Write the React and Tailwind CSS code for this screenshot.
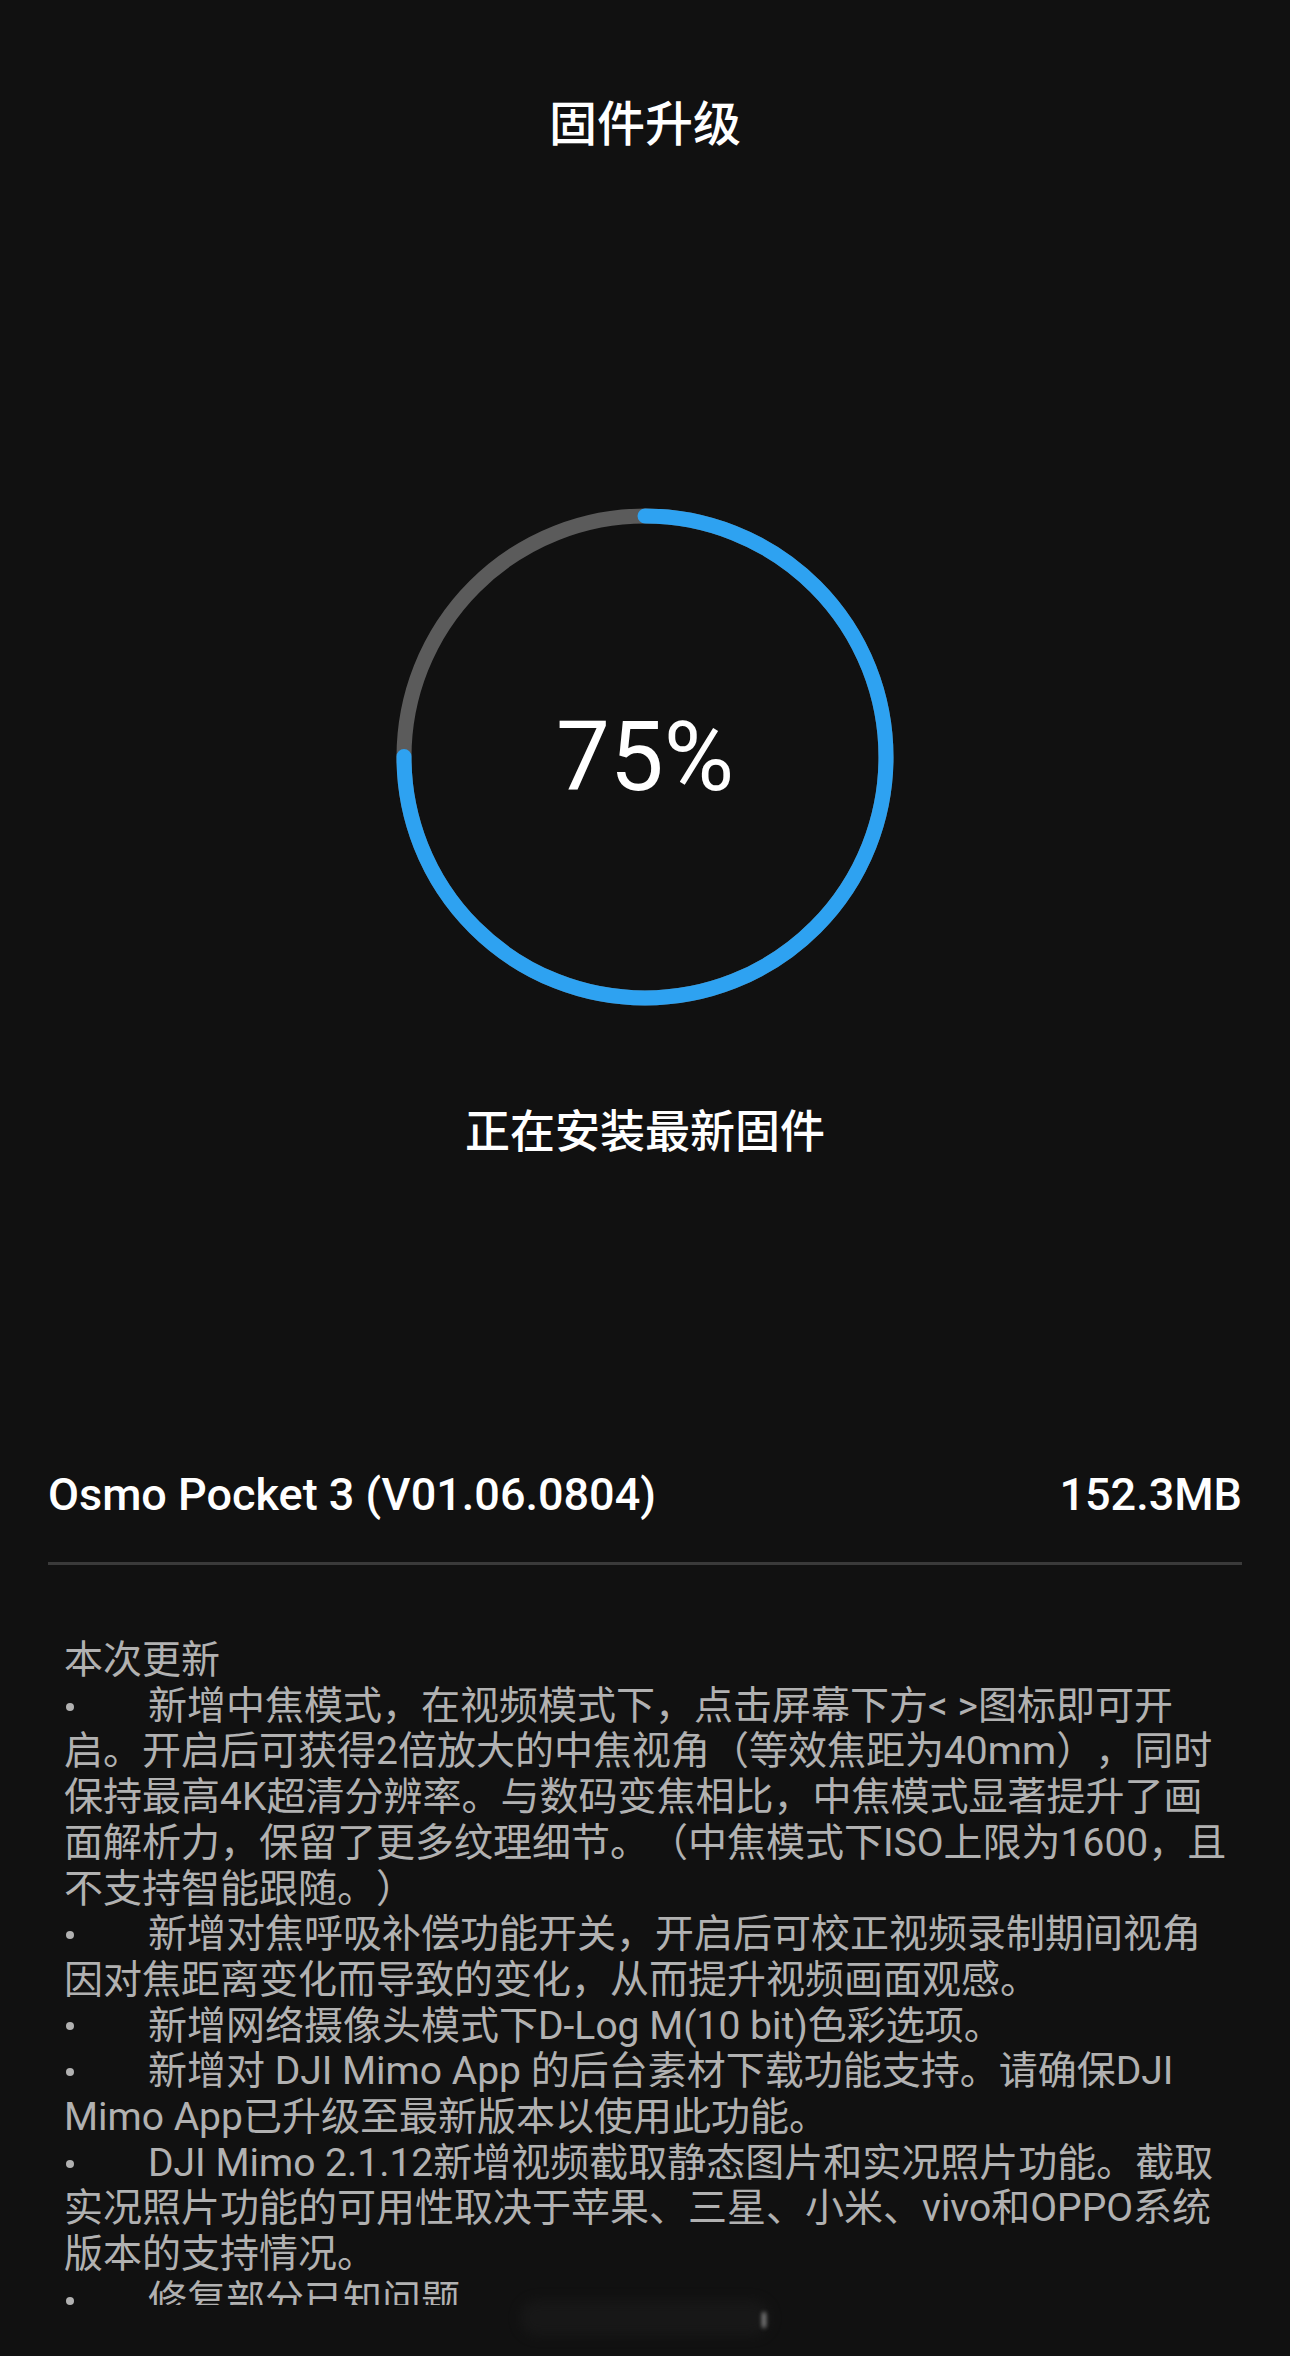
import React from "react";

const notes = [
  { b: false, t: "本次更新" },
  { b: true, t: "新增中焦模式，在视频模式下，点击屏幕下方< >图标即可开" },
  { b: false, t: "启。开启后可获得2倍放大的中焦视角（等效焦距为40mm），同时" },
  { b: false, t: "保持最高4K超清分辨率。与数码变焦相比，中焦模式显著提升了画" },
  { b: false, t: "面解析力，保留了更多纹理细节。（中焦模式下ISO上限为1600，且" },
  { b: false, t: "不支持智能跟随。）" },
  { b: true, t: "新增对焦呼吸补偿功能开关，开启后可校正视频录制期间视角" },
  { b: false, t: "因对焦距离变化而导致的变化，从而提升视频画面观感。" },
  { b: true, t: "新增网络摄像头模式下D-Log M(10 bit)色彩选项。" },
  { b: true, t: "新增对 DJI Mimo App 的后台素材下载功能支持。请确保DJI" },
  { b: false, t: "Mimo App已升级至最新版本以使用此功能。" },
  { b: true, t: "DJI Mimo 2.1.12新增视频截取静态图片和实况照片功能。截取" },
  { b: false, t: "实况照片功能的可用性取决于苹果、三星、小米、vivo和OPPO系统" },
  { b: false, t: "版本的支持情况。" },
  { b: true, t: "修复部分已知问题" },
];

function Ring() {
  const r = 241;
  const c = 2 * Math.PI * r;
  return (
    <svg width="500" height="500" viewBox="0 0 500 500" className="block">
      <circle cx="250" cy="250" r={r} fill="none" stroke="#5b5b5b" strokeWidth="15" />
      <circle
        cx="250"
        cy="250"
        r={r}
        fill="none"
        stroke="#2ea2f1"
        strokeWidth="15"
        strokeLinecap="round"
        strokeDasharray={`${c * 0.75} ${c}`}
        transform="rotate(-90 250 250)"
      />
    </svg>
  );
}

export default function App() {
  return (
    <div
      className="relative w-[1290px] h-[2356px] overflow-hidden bg-[#111111] text-white [text-spacing-trim:space-all]"
      style={{ fontFamily: "Roboto, 'Noto Sans CJK SC', sans-serif" }}
    >
      <div className="h-[250px] flex items-center justify-center">
        <div className="text-[48px] leading-[58px] font-medium">固件升级</div>
      </div>

      <div className="mt-[257px] flex justify-center">
        <div className="relative w-[500px] h-[500px]">
          <Ring />
          <div className="absolute inset-0 flex items-center justify-center">
            <span className="text-[96px] leading-none font-normal" style={{ fontFamily: "Roboto, sans-serif" }}>
              75%
            </span>
          </div>
        </div>
      </div>

      <div className="mt-[99px] text-center text-[45px] leading-[54px] font-medium">正在安装最新固件</div>

      <div className="mt-[308px] px-[48px] flex justify-between items-center text-[45px] leading-[54px] font-medium">
        <span>Osmo Pocket 3 (V01.06.0804)</span>
        <span>152.3MB</span>
      </div>

      <div className="mt-[40px] mx-[48px] h-[3px] bg-[#3a3a3a]" />

      <div className="mt-[73px] pl-[64px] h-[667px] overflow-hidden text-[39px] leading-[45.7px] text-[#b1b1b1] [text-spacing-trim:space-all]">
        {notes.map((n, i) => (
          <div key={i} className="whitespace-nowrap flex items-center">
            {n.b && (
              <span className="w-[84px] shrink-0 flex items-center">
                <span className="block w-[8px] h-[8px] ml-[2px] rounded-full bg-[#b1b1b1]" />
              </span>
            )}
            <span>{n.t}</span>
          </div>
        ))}
      </div>

      <div className="absolute left-[520px] top-[2300px] w-[250px] h-[36px] rounded-full bg-[#1a1a1a] blur-[6px] opacity-70" />
      <div className="absolute left-[762px] top-[2312px] w-[4px] h-[16px] rounded-full bg-[#8a8a8a] blur-[2px]" />
    </div>
  );
}
